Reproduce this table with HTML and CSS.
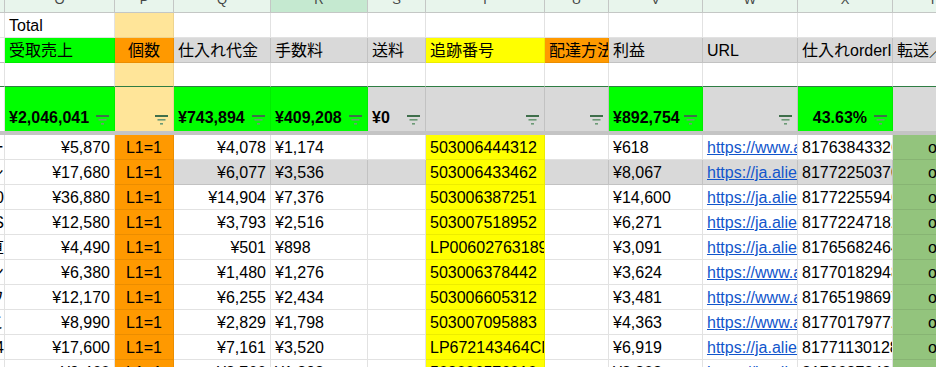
FILE: index.html
```html
<!DOCTYPE html>
<html lang="ja">
<head>
<meta charset="utf-8">
<title>Sheet</title>
<link rel="stylesheet" href="styles.css">
</head>
<body>
<div class="sheet">
  <div class="row hdr">
    <div class="c"></div><div class="c">O</div><div class="c">P</div><div class="c">Q</div><div class="c sel">R</div><div class="c">S</div><div class="c">T</div><div class="c">U</div><div class="c">V</div><div class="c">W</div><div class="c">X</div><div class="c">Y</div>
  </div>
  <div class="row">
    <div class="c"></div><div class="c"><span>Total</span></div><div class="c lor"></div><div class="c"></div><div class="c"></div><div class="c"></div><div class="c"></div><div class="c"></div><div class="c"></div><div class="c"></div><div class="c"></div><div class="c"></div>
  </div>
  <div class="row labels">
    <div class="c"></div>
    <div class="c grn"><span>受取売上</span></div>
    <div class="c org ctr"><span>個数</span></div>
    <div class="c gry"><span>仕入れ代金</span></div>
    <div class="c gry"><span>手数料</span></div>
    <div class="c gry"><span>送料</span></div>
    <div class="c yel"><span>追跡番号</span></div>
    <div class="c org"><span>配達方法</span></div>
    <div class="c gry"><span>利益</span></div>
    <div class="c gry"><span>URL</span></div>
    <div class="c gry"><span>仕入れorderID</span></div>
    <div class="c gry"><span>転送／発送</span></div>
  </div>
  <div class="row empty">
    <div class="c"></div><div class="c"></div><div class="c lor"></div><div class="c"></div><div class="c"></div><div class="c"></div><div class="c"></div><div class="c"></div><div class="c"></div><div class="c"></div><div class="c"></div><div class="c"></div>
  </div>
  <div class="row totals">
    <div class="c"></div>
    <div class="c grn"><span class="v">¥2,046,041</span><svg class="f" viewBox="0 0 13 10"><rect width="13" height="2"/><rect x="2.5" y="4" width="8" height="1.6" class="m"/><rect x="5" y="8" width="3" height="1.6" class="m"/></svg></div>
    <div class="c lor"><span class="v"></span><svg class="f" viewBox="0 0 13 10"><rect width="13" height="2"/><rect x="2.5" y="4" width="8" height="1.6" class="m"/><rect x="5" y="8" width="3" height="1.6" class="m"/></svg></div>
    <div class="c grn"><span class="v">¥743,894</span><svg class="f" viewBox="0 0 13 10"><rect width="13" height="2"/><rect x="2.5" y="4" width="8" height="1.6" class="m"/><rect x="5" y="8" width="3" height="1.6" class="m"/></svg></div>
    <div class="c grn"><span class="v">¥409,208</span><svg class="f" viewBox="0 0 13 10"><rect width="13" height="2"/><rect x="2.5" y="4" width="8" height="1.6" class="m"/><rect x="5" y="8" width="3" height="1.6" class="m"/></svg></div>
    <div class="c gry"><span class="v">¥0</span><svg class="f" viewBox="0 0 13 10"><rect width="13" height="2"/><rect x="2.5" y="4" width="8" height="1.6" class="m"/><rect x="5" y="8" width="3" height="1.6" class="m"/></svg></div>
    <div class="c gry"><span class="v"></span><svg class="f" viewBox="0 0 13 10"><rect width="13" height="2"/><rect x="2.5" y="4" width="8" height="1.6" class="m"/><rect x="5" y="8" width="3" height="1.6" class="m"/></svg></div>
    <div class="c gry"><span class="v"></span><svg class="f" viewBox="0 0 13 10"><rect width="13" height="2"/><rect x="2.5" y="4" width="8" height="1.6" class="m"/><rect x="5" y="8" width="3" height="1.6" class="m"/></svg></div>
    <div class="c grn"><span class="v">¥892,754</span><svg class="f" viewBox="0 0 13 10"><rect width="13" height="2"/><rect x="2.5" y="4" width="8" height="1.6" class="m"/><rect x="5" y="8" width="3" height="1.6" class="m"/></svg></div>
    <div class="c gry"><span class="v"></span><svg class="f" viewBox="0 0 13 10"><rect width="13" height="2"/><rect x="2.5" y="4" width="8" height="1.6" class="m"/><rect x="5" y="8" width="3" height="1.6" class="m"/></svg></div>
    <div class="c grn"><span class="v vr">43.63%</span><svg class="f" viewBox="0 0 13 10"><rect width="13" height="2"/><rect x="2.5" y="4" width="8" height="1.6" class="m"/><rect x="5" y="8" width="3" height="1.6" class="m"/></svg></div>
    <div class="c gry"></div>
  </div>
  <div class="freeze"></div>

  <div class="row data">
    <div class="c r"><span>ー</span></div><div class="c r"><span>¥5,870</span></div><div class="c org ctr"><span>L1=1</span></div><div class="c r"><span>¥4,078</span></div><div class="c"><span>¥1,174</span></div><div class="c"></div><div class="c yel"><span>503006444312</span></div><div class="c"></div><div class="c"><span>¥618</span></div><div class="c"><a>https://www.aliexpress.com/</a></div><div class="c"><span>817638433260</span></div><div class="c ygr ctr"><span>o</span></div>
  </div>
  <div class="row data hl">
    <div class="c r"><span>シ</span></div><div class="c r"><span>¥17,680</span></div><div class="c org ctr"><span>L1=1</span></div><div class="c r gry"><span>¥6,077</span></div><div class="c gry"><span>¥3,536</span></div><div class="c gry"></div><div class="c yel"><span>503006433462</span></div><div class="c gry"></div><div class="c gry"><span>¥8,067</span></div><div class="c gry"><a>https://ja.aliexpress.com/</a></div><div class="c gry"><span>817722503700</span></div><div class="c ygr ctr"><span>o</span></div>
  </div>
  <div class="row data">
    <div class="c r"><span>0</span></div><div class="c r"><span>¥36,880</span></div><div class="c org ctr"><span>L1=1</span></div><div class="c r"><span>¥14,904</span></div><div class="c"><span>¥7,376</span></div><div class="c"></div><div class="c yel"><span>503006387251</span></div><div class="c"></div><div class="c"><span>¥14,600</span></div><div class="c"><a>https://ja.aliexpress.com/</a></div><div class="c"><span>817722559460</span></div><div class="c ygr ctr"><span>o</span></div>
  </div>
  <div class="row data">
    <div class="c r"><span>S</span></div><div class="c r"><span>¥12,580</span></div><div class="c org ctr"><span>L1=1</span></div><div class="c r"><span>¥3,793</span></div><div class="c"><span>¥2,516</span></div><div class="c"></div><div class="c yel"><span>503007518952</span></div><div class="c"></div><div class="c"><span>¥6,271</span></div><div class="c"><a>https://ja.aliexpress.com/</a></div><div class="c"><span>817722471820</span></div><div class="c ygr ctr"><span>o</span></div>
  </div>
  <div class="row data">
    <div class="c r"><span>直</span></div><div class="c r"><span>¥4,490</span></div><div class="c org ctr"><span>L1=1</span></div><div class="c r"><span>¥501</span></div><div class="c"><span>¥898</span></div><div class="c"></div><div class="c yel"><span>LP00602763189</span></div><div class="c"></div><div class="c"><span>¥3,091</span></div><div class="c"><a>https://ja.aliexpress.com/</a></div><div class="c"><span>817656824640</span></div><div class="c ygr ctr"><span>o</span></div>
  </div>
  <div class="row data">
    <div class="c r"><span>ン</span></div><div class="c r"><span>¥6,380</span></div><div class="c org ctr"><span>L1=1</span></div><div class="c r"><span>¥1,480</span></div><div class="c"><span>¥1,276</span></div><div class="c"></div><div class="c yel"><span>503006378442</span></div><div class="c"></div><div class="c"><span>¥3,624</span></div><div class="c"><a>https://www.aliexpress.com/</a></div><div class="c"><span>817701829480</span></div><div class="c ygr ctr"><span>o</span></div>
  </div>
  <div class="row data">
    <div class="c r"><span>ワ</span></div><div class="c r"><span>¥12,170</span></div><div class="c org ctr"><span>L1=1</span></div><div class="c r"><span>¥6,255</span></div><div class="c"><span>¥2,434</span></div><div class="c"></div><div class="c yel"><span>503006605312</span></div><div class="c"></div><div class="c"><span>¥3,481</span></div><div class="c"><a>https://www.aliexpress.com/</a></div><div class="c"><span>817651986970</span></div><div class="c ygr ctr"><span>o</span></div>
  </div>
  <div class="row data">
    <div class="c r"><span>こ</span></div><div class="c r"><span>¥8,990</span></div><div class="c org ctr"><span>L1=1</span></div><div class="c r"><span>¥2,829</span></div><div class="c"><span>¥1,798</span></div><div class="c"></div><div class="c yel"><span>503007095883</span></div><div class="c"></div><div class="c"><span>¥4,363</span></div><div class="c"><a>https://www.aliexpress.com/</a></div><div class="c"><span>817701797720</span></div><div class="c ygr ctr"><span>o</span></div>
  </div>
  <div class="row data">
    <div class="c r"><span>4</span></div><div class="c r"><span>¥17,600</span></div><div class="c org ctr"><span>L1=1</span></div><div class="c r"><span>¥7,161</span></div><div class="c"><span>¥3,520</span></div><div class="c"></div><div class="c yel"><span>LP672143464CN</span></div><div class="c"></div><div class="c"><span>¥6,919</span></div><div class="c"><a>https://ja.aliexpress.com/</a></div><div class="c"><span>817711301280</span></div><div class="c ygr ctr"><span>o</span></div>
  </div>
  <div class="row data">
    <div class="c r"><span>ト</span></div><div class="c r"><span>¥9,460</span></div><div class="c org ctr"><span>L1=1</span></div><div class="c r"><span>¥3,766</span></div><div class="c"><span>¥1,892</span></div><div class="c"></div><div class="c yel"><span>503006576010</span></div><div class="c"></div><div class="c"><span>¥3,802</span></div><div class="c"><a>https://ja.aliexpress.com/</a></div><div class="c"><span>817668724800</span></div><div class="c ygr ctr"><span>o</span></div>
  </div>
</div>
</body>
</html>
```
FILE: styles.css
```css
html, body {
  margin: 0;
  padding: 0;
  background: #ffffff;
}
body {
  width: 936px;
  height: 367px;
  overflow: hidden;
  font-family: "Liberation Sans", "Noto Sans CJK JP", Arial, sans-serif;
  font-size: 16px;
  color: #000000;
}
.sheet {
  --cols: 5px 110px 59px 97px 97px 58px 119px 64px 94px 95px 95px 80px;
  margin-top: -12px;
  width: 973px;
}
.row {
  display: grid;
  grid-template-columns: var(--cols);
  height: 25px;
}
.c {
  box-sizing: border-box;
  border-right: 1px solid #e2e2e2;
  border-bottom: 1px solid #e2e2e2;
  padding: 2px 4px 0 4px;
  display: flex;
  align-items: center;
  overflow: hidden;
  white-space: nowrap;
  line-height: 22px;
  min-width: 0;
}
.c > span, .c > a {
  flex: none;
}
.row > .c:first-child {
  padding: 2px 0 0 0;
  justify-content: flex-end;
}
.r { justify-content: flex-end; }
.ctr { justify-content: center; }

/* column header */
.hdr .c {
  background: #e8f5ec;
  border-right-color: #c4c7c5;
  border-bottom-color: #c4c7c5;
  justify-content: center;
  font-size: 13px;
  color: #444746;
  padding-top: 0;
  line-height: 24px;
}
.hdr .c.sel {
  background: #c5e9d0;
}

/* fills */
.grn { background: #00ff00; border-color: rgba(0,0,0,0.07) !important; }
.org { background: #ff9900; border-color: rgba(0,0,0,0.08) !important; }
.lor { background: #ffe599; border-color: rgba(0,0,0,0.07) !important; }
.gry { background: #d9d9d9; border-color: rgba(0,0,0,0.1) !important; }
.yel { background: #ffff00; border-color: rgba(0,0,0,0.07) !important; }
.ygr { background: #93c47d; border-color: rgba(0,0,0,0.08) !important; }

.labels .c {
  border-bottom-color: #bdbdbd;
}
.empty {
  height: 24px;
}
.empty .c {
  border-bottom: 1px solid #2f7d43 !important;
}

/* totals row */
.totals {
  height: 44px;
}
.totals .c {
  align-items: flex-end;
  padding: 0 5px 4px 4px;
  line-height: 18px;
  border-bottom: none;
}
.totals .c:first-child {
  padding: 0;
}
.totals .v {
  flex: 1 1 auto;
  font-weight: bold;
}
.totals .v.vr {
  text-align: right;
  margin-right: 7px;
}
.f {
  flex: none;
  width: 13px;
  height: 10px;
  margin-bottom: 2px;
  fill: #3f6f4b;
}
.f .m {
  fill: #6c9a76;
}
.freeze {
  height: 4px;
  background: #c4c4c4;
}

/* data rows */
.data a {
  color: #1155cc;
  text-decoration: underline;
}
.data .ygr {
  padding-left: 0;
  padding-right: 0;
}
```
